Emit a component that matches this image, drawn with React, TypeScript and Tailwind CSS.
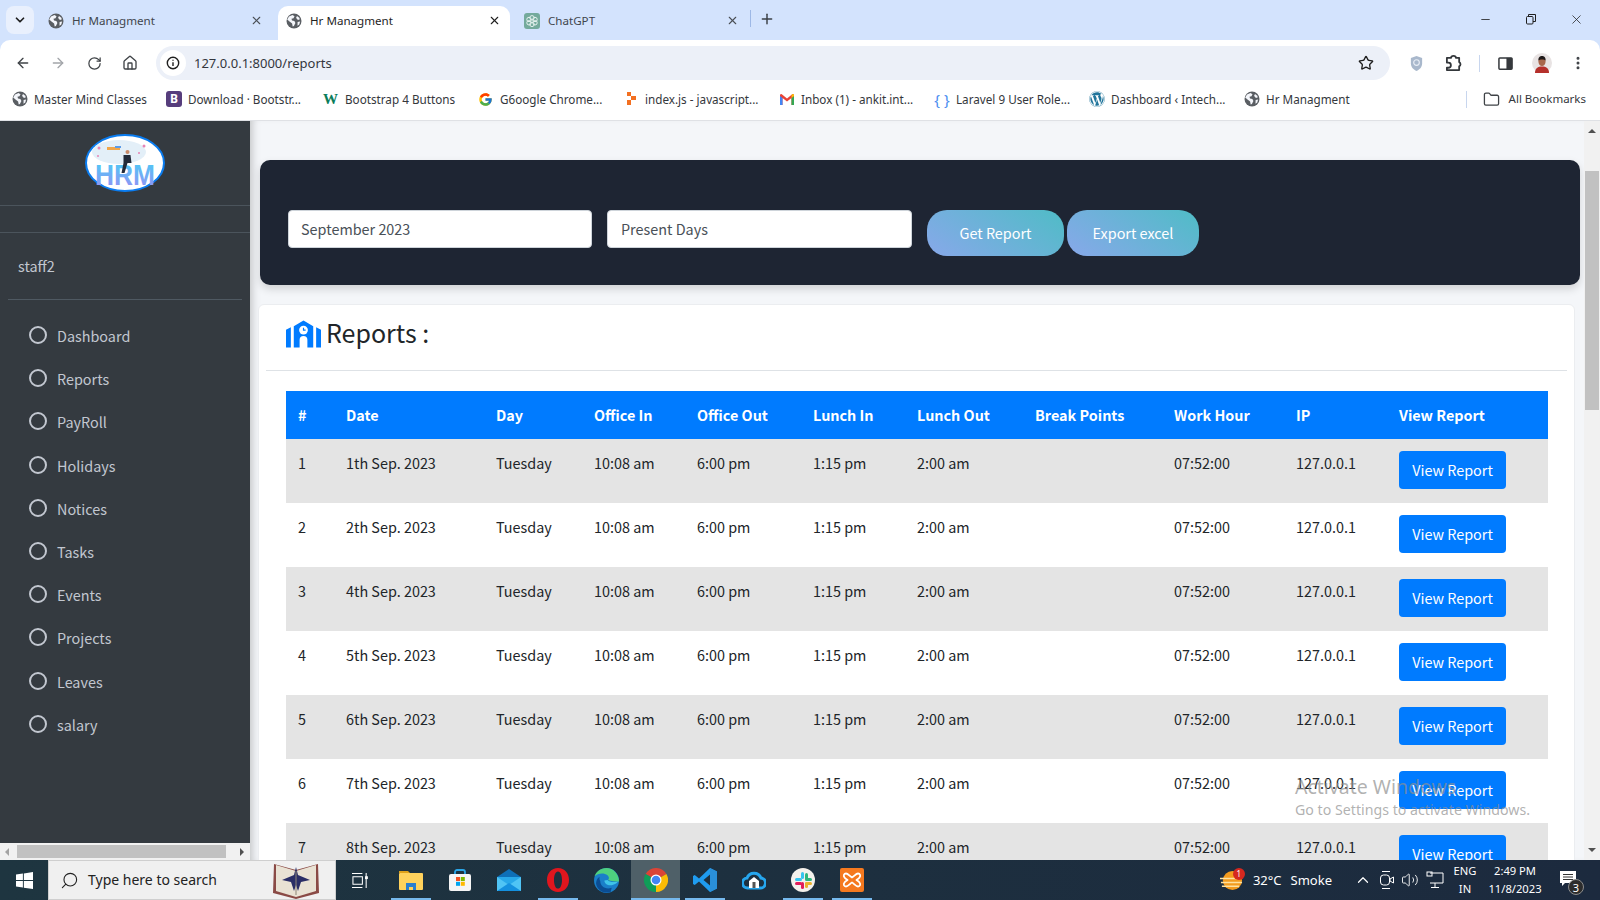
import React from "react";
import { ArrowLeft, ArrowRight, RotateCw, Home, Star, MoreVertical, X, Plus, ChevronDown, Minus, Search, ChevronUp, Volume2, Folder } from "lucide-react";
import { FcGoogle } from "react-icons/fc";
import { FaWordpress } from "react-icons/fa";

const ui = "font-['Noto_Sans',sans-serif]";
const page = "font-['Noto_Sans_CJK_SC','Noto_Sans',sans-serif]";

function Globe({ className = "" }: { className?: string }) {
  return (
    <svg viewBox="0 0 16 16" className={className}>
      <circle cx="8" cy="8" r="7.5" fill="#5a5e63" />
      <path d="M3 3.5 6.5 2l2 1.2-1 2-2 .6.5 1.6 2.4.6 1 2-1.5 3-1.2.4-.6-3-2.6-2L1.2 6.4zM11 3l2.6 2-.3 2-2-.6-1.2-1.6zM11.6 9l2.5-.4-.8 3-1.8 1.2z" fill="#f4f6fb" />
    </svg>
  );
}

function ChatGptIcon() {
  return (
    <svg viewBox="0 0 16 16" className="h-[16px] w-[16px]">
      <rect width="16" height="16" rx="3" fill="#74aa9c" />
      <g fill="none" stroke="#e6f2ef" strokeWidth="1">
        <circle cx="8" cy="4.8" r="2.2" />
        <circle cx="5" cy="6.5" r="2.2" />
        <circle cx="11" cy="6.5" r="2.2" />
        <circle cx="5" cy="9.8" r="2.2" />
        <circle cx="11" cy="9.8" r="2.2" />
        <circle cx="8" cy="11.4" r="2.2" />
      </g>
    </svg>
  );
}

function Tab({ active, title, icon, box }: { active?: boolean; title: string; icon: React.ReactNode; box: string }) {
  return (
    <div className={`relative flex h-[34px] items-center rounded-t-[10px] pb-[5px] ${box} ${active ? "bg-white text-[#1f1f1f]" : "text-[#41464d]"}`}>
      <span className="flex w-[24px] shrink-0 items-center">{icon}</span>
      <span className={`flex-1 text-[11.6px] leading-[16px] ${ui}`}>{title}</span>
      <X size={13} strokeWidth={2} className={active ? "text-[#1f1f1f]" : "text-[#4a4f55]"} />
    </div>
  );
}

const bookmarks: { w: string; label: string; icon: React.ReactNode }[] = [
  { w: "w-[154px]", label: "Master Mind Classes", icon: <Globe className="h-[16px] w-[16px]" /> },
  { w: "w-[157px]", label: "Download · Bootstr...", icon: <span className="flex h-[16px] w-[16px] items-center justify-center rounded-[3px] bg-[#563d7c] text-[12px] font-bold leading-none text-white">B</span> },
  { w: "w-[155px]", label: "Bootstrap 4 Buttons", icon: <span className="w-[16px] text-[15px] font-bold leading-none text-[#0b7d5a] font-['Liberation_Serif',serif]">W</span> },
  { w: "w-[145px]", label: "G6oogle Chrome...", icon: <FcGoogle size={15} /> },
  { w: "w-[156px]", label: "index.js - javascript...", icon: (
    <svg viewBox="0 0 16 16" className="h-[16px] w-[16px]"><path d="M4 1h4v4H4zM8 5h5v4H8zM4 9h4v5H4z" fill="#f37021" /></svg>
  ) },
  { w: "w-[155px]", label: "Inbox (1) - ankit.int...", icon: (
    <svg viewBox="0 0 16 16" className="h-[16px] w-[16px]">
      <path d="M1 3.5 2.5 3 8 7.5 13.500 3 15 3.500V14h-2.500V7L8 10.500 3.500 7V14H1z" fill="#ea4335" />
      <path d="M1 5v9h2.500V7z" fill="#4285f4" /><path d="M15 5v9h-2.500V7z" fill="#34a853" /><path d="M13.500 3 15 3.500V5l-2.500 2V4z" fill="#fbbc05" />
    </svg>
  ) },
  { w: "w-[155px]", label: "Laravel 9 User Role...", icon: <span className={`w-[16px] whitespace-pre text-center text-[15px] leading-none text-[#4a8df0] ${ui}`}>{"{ }"}</span> },
  { w: "w-[155px]", label: "Dashboard ‹ Intech...", icon: <FaWordpress size={16} className="text-[#21759b]" /> },
  { w: "w-[130px]", label: "Hr Managment", icon: <Globe className="h-[16px] w-[16px]" /> },
];

function ChromeBars() {
  return (
    <div className="shrink-0">
      <div className="flex h-[40px] bg-[#d3e3fd]">
        <div className="flex items-start pt-[6px]">
          <div className="ml-[6px] flex h-[28px] w-[28px] items-center justify-center rounded-[8px] bg-[#e9f0fd]">
            <ChevronDown size={14} strokeWidth={3} className="text-[#1f1f1f]" />
          </div>
        </div>
        <div className="ml-[6px] flex items-end">
          <Tab title="Hr Managment" box="w-[238px] pl-[8px] pr-[15px]" icon={<Globe className="h-[16px] w-[16px]" />} />
          <Tab active title="Hr Managment" box="w-[232px] pl-[8px] pr-[9px]" icon={<Globe className="h-[16px] w-[16px]" />} />
          <Tab title="ChatGPT" box="w-[239px] pl-[14px] pr-[10px]" icon={<ChatGptIcon />} />
          <div className="mb-[13px] ml-[1px] h-[17px] w-[1px] bg-[#9db8e6]" />
          <Plus size={16} strokeWidth={2.200} className="mb-[13px] ml-[8px] text-[#3b4046]" />
        </div>
        <div className="ml-auto flex items-center pb-[2px] text-[#1f1f1f]">
          <Minus size={13} strokeWidth={1.500} className="mr-[33px]" />
          <svg viewBox="0 0 12 12" className="mr-[32px] h-[12px] w-[12px]" fill="none" stroke="#1f1f1f" strokeWidth="1"><rect x="1.500" y="3.500" width="6.500" height="7.500" rx="1" /><path d="M3.500 3.500V1.500h7v7h-2.500" /></svg>
          <X size={15} strokeWidth={1.200} className="mr-[16px]" />
        </div>
      </div>
      <div className="flex h-[40px] items-center rounded-t-[10px] bg-white pt-[6px]">
        <ArrowLeft size={16} strokeWidth={2} className="ml-[15px] text-[#3f4347]" />
        <ArrowRight size={16} strokeWidth={2} className="ml-[19px] text-[#a2a5a9]" />
        <RotateCw size={15} strokeWidth={2} className="ml-[21px] text-[#3f4347]" />
        <Home size={16} strokeWidth={2} className="ml-[20px] text-[#3f4347]" />
        <div className="ml-[18px] flex h-[34px] w-[1234px] items-center rounded-full bg-[#ecf0f8] pl-[4px] pr-[16px]">
          <span className="flex h-[26px] w-[26px] items-center justify-center rounded-full bg-white">
            <svg viewBox="0 0 16 16" className="h-[14px] w-[14px]" fill="none" stroke="#1f1f1f" strokeWidth="1.600"><circle cx="8" cy="8" r="6.500" /><path d="M8 7v4.500M8 4.200v1.300" /></svg>
          </span>
          <span className={`ml-[8px] text-[13px] leading-[18px] text-[#33363d] ${ui}`}>127.0.0.1:8000/reports</span>
          <Star size={16} strokeWidth={2} className="ml-auto text-[#1f1f1f]" />
        </div>
        <svg viewBox="0 0 16 18" className="ml-[19px] h-[17px] w-[15px]"><path d="M8 1 14 3v6c0 4-3 6.500-6 8-3-1.500-6-4-6-8V3z" fill="#a9b8cc" /><circle cx="8" cy="8" r="3" fill="none" stroke="#e9eef6" strokeWidth="1.200" /></svg>
        <svg viewBox="0 0 18 18" className="ml-[21px] h-[17px] w-[17px]" fill="none" stroke="#33373b" strokeWidth="1.900" strokeLinejoin="round"><path d="M2 3h4.500a2.500 2 0 0 1 5 0H15v4.500a2.500 2.500 0 0 1 0 4.500V16H2v-2.500h1.500a2 2 0 0 0 0-5.500H2z" /></svg>
        <div className="ml-[17px] h-[17px] w-[1px] bg-[#c8d6ee]" />
        <svg viewBox="0 0 16 16" className="ml-[18px] h-[15px] w-[15px]" fill="none"><rect x="1" y="2" width="14" height="12" rx="1" stroke="#35383c" strokeWidth="1.600" /><rect x="9" y="2" width="6" height="12" fill="#35383c" /></svg>
        <svg viewBox="0 0 20 20" className="ml-[19px] h-[20px] w-[20px]">
          <circle cx="10" cy="10" r="10" fill="#e8e3e3" />
          <path d="M3 20c0-5 3-6.500 7-6.500s7 1.500 7 6.500z" fill="#b5302b" />
          <ellipse cx="10" cy="8.500" rx="3.600" ry="4.600" fill="#a8674b" />
          <path d="M6.400 7.500C6.400 4 8 3 10 3s3.600 1 3.600 4.500c-1-1.500-6-1.500-7.200 0z" fill="#1f1a1a" />
        </svg>
        <MoreVertical size={16} strokeWidth={2.500} className="ml-[18px] text-[#3f4347]" />
      </div>
      <div className="flex h-[41px] items-center border-b border-[#dfe1e5] bg-white pl-[12px] pb-[2px]">
        {bookmarks.map((b) => (
          <div key={b.label} className={`flex shrink-0 items-center ${b.w}`}>
            <span className="flex w-[22px] shrink-0 items-center">{b.icon}</span>
            <span className={`whitespace-nowrap text-[11.7px] leading-[16px] text-[#34373c] ${ui}`}>{b.label}</span>
          </div>
        ))}
        <div className="ml-auto flex items-center pr-[14px]">
          <div className="mr-[16px] h-[17px] w-[1px] bg-[#c8d6ee]" />
          <Folder size={17} strokeWidth={1.800} className="mr-[9px] text-[#3f4347]" />
          <span className={`text-[11.500px] leading-[16px] text-[#34373c] ${ui}`}>All Bookmarks</span>
        </div>
      </div>
    </div>
  );
}

function Logo() {
  return (
    <svg viewBox="0 0 80 58" className="h-[58px] w-[80px]">
      <ellipse cx="40" cy="29" rx="39" ry="28" fill="#fff" stroke="#0a7cf0" strokeWidth="2" />
      <ellipse cx="34" cy="18" rx="27" ry="12" fill="#e3eff8" />
      <rect x="22" y="13" width="13" height="3" fill="#f0a64a" />
      <rect x="30" y="12" width="6" height="2" fill="#5b9be8" />
      <circle cx="14" cy="14" r="1.500" fill="#e685b5" />
      <circle cx="59" cy="12" r="1.500" fill="#e685b5" />
      <circle cx="54" cy="19" r="1" fill="#e685b5" />
      <circle cx="13" cy="22" r="1" fill="#e685b5" />
      <defs>
        <linearGradient id="hrmg" x1="0" y1="0" x2="0" y2="1"><stop offset="0" stopColor="#45d0f5" /><stop offset="1" stopColor="#9a8cf5" /></linearGradient>
      </defs>
      <text x="40" y="51" textAnchor="middle" fontSize="29" fontWeight="700" fill="url(#hrmg)" fontFamily="'Liberation Sans',sans-serif" textLength="60" lengthAdjust="spacingAndGlyphs">HRM</text>
      <circle cx="42.500" cy="18" r="2" fill="#c98b6a" />
      <path d="M38.500 21h7l1 8h-4l-3 10h-3l2-10z" fill="#222b3a" />
    </svg>
  );
}

const nav = ["Dashboard", "Reports", "PayRoll", "Holidays", "Notices", "Tasks", "Events", "Projects", "Leaves", "salary"];

function Sidebar() {
  return (
    <aside className={`flex w-[250px] shrink-0 flex-col bg-[#343a40] ${page}`}>
      <div className="flex h-[85px] justify-center border-b border-[#4b545c] pt-[13px]">
        <Logo />
      </div>
      <div className="h-[27px] border-b border-[#4b545c]" />
      <div className="mx-[8px] h-[67px] border-b border-[#4f5962] pl-[10px] pt-[21px] text-[14.4px] leading-[24px] text-[#c2c7d0]">staff2</div>
      <nav className="flex flex-1 flex-col gap-[19.200px] pl-[29px] pt-[24px]">
        {nav.map((n) => (
          <div key={n} className="flex h-[24px] items-center text-[14.4px] leading-[24px] text-[#c2c7d0]">
            <span className="-mt-[2px] h-[18px] w-[18px] rounded-full border-2 border-[#c2c7d0]" />
            <span className="ml-[10px]">{n}</span>
          </div>
        ))}
      </nav>
      <div className="flex h-[17px] items-center bg-[#f1f1f1]">
        <div className="ml-[5px] h-0 w-0 border-y-[4px] border-r-[4px] border-y-transparent border-r-[#a3a3a3]" />
        <div className="ml-[8px] h-[13px] w-[209px] bg-[#c1c1c1]" />
        <div className="ml-[14px] h-0 w-0 border-y-[4px] border-l-[4px] border-y-transparent border-l-[#505050]" />
      </div>
    </aside>
  );
}

const colW = ["w-[48px]", "w-[150px]", "w-[98px]", "w-[103px]", "w-[116px]", "w-[104px]", "w-[118px]", "w-[139px]", "w-[122px]", "w-[103px]", "w-[161px]"];
const heads = ["#", "Date", "Day", "Office In", "Office Out", "Lunch In", "Lunch Out", "Break Points", "Work Hour", "IP", "View Report"];
const days = ["1th", "2th", "4th", "5th", "6th", "7th", "8th"];

function ReportsIcon() {
  return (
    <svg viewBox="0 0 36 28" className="h-[28px] w-[35px]">
      <path d="M0 9.500 5 7v21H0zM31 7l5 2.500V28h-5zM18 0l10 6v22h-6v-8a4 4 0 0 0-8 0v8H8V6z" fill="#007bff" />
      <circle cx="18" cy="10" r="4.500" fill="#fff" />
      <path d="M18 7.500V10h2.200" fill="none" stroke="#007bff" strokeWidth="1.200" />
    </svg>
  );
}

function Content() {
  return (
    <main className={`relative min-w-0 flex-1 overflow-hidden bg-[#f4f6f9] pt-[39px] shadow-[inset_8px_0_8px_-6px_rgba(0,0,0,0.22)] ${page}`}>
      <section className="ml-[10px] mr-[4px] flex h-[125px] items-start rounded-[10px] bg-[#1e2533] pl-[28px] pt-[50px] shadow-[0_4px_8px_rgba(0,0,0,0.15)]">
        <div className="flex h-[38px] w-[304px] items-center rounded-[4px] border border-[#ced4da] bg-white pl-[12px] text-[14.4px] leading-[24px] text-[#495057]">September 2023</div>
        <div className="ml-[15px] flex h-[38px] w-[305px] items-center rounded-[4px] border border-[#ced4da] bg-white pl-[13px] text-[14.4px] leading-[24px] text-[#495057]">Present Days</div>
        <button className="ml-[15px] h-[46px] w-[137px] rounded-[20px] bg-[linear-gradient(35deg,#88a8ea,#4fbcc6)] text-[14.4px] leading-[24px] text-white">Get Report</button>
        <button className="ml-[3px] h-[46px] w-[132px] rounded-[20px] bg-[linear-gradient(35deg,#88a8ea,#4fbcc6)] text-[14.4px] leading-[24px] text-white">Export excel</button>
      </section>
      <section className="ml-[8px] mr-[9px] mt-[19px] h-[600px] rounded-[6px] border border-[#ebedf0] bg-white pt-[1px]">
        <div className="mx-[7px] flex h-[65px] items-start border-b border-[#dee2e6] pl-[20px] pt-[14px]">
          <ReportsIcon />
          <h1 className="ml-[5px] -mt-[5px] text-[25px] leading-[34px] text-[#212529]">Reports :</h1>
        </div>
        <table className="ml-[27px] mt-[20px] w-[1262px] table-fixed border-collapse text-[14.4px] leading-[24px] text-[#212529]">
          <colgroup>
            {colW.map((c, i) => <col key={i} className={c} />)}
          </colgroup>
          <thead>
            <tr className="h-[48px] bg-[#007bff] text-left text-white">
              {heads.map((h) => <th key={h} className="px-[12px] align-middle font-bold">{h}</th>)}
            </tr>
          </thead>
          <tbody>
            {days.map((d, i) => (
              <tr key={d} className={`h-[64px] ${i % 2 === 0 ? "bg-[#e4e4e4]" : "bg-white"}`}>
                {[String(i + 1), `${d} Sep. 2023`, "Tuesday", "10:08 am", "6:00 pm", "1:15 pm", "2:00 am", "", "07:52:00", "127.0.0.1"].map((v, j) => (
                  <td key={j} className="px-[12px] pt-[12px] align-top">{v}</td>
                ))}
                <td className="px-[12px] pt-[12px] align-top">
                  <button className="h-[38px] w-[107px] rounded-[4px] bg-[#007bff] text-center text-[14.4px] leading-[24px] text-white">View Report</button>
                </td>
              </tr>
            ))}
          </tbody>
        </table>
      </section>
    </main>
  );
}

function PageScrollbar() {
  return (
    <div className="flex w-[16px] shrink-0 flex-col items-center bg-[#f1f1f1]">
      <div className="mt-[8px] h-0 w-0 border-x-[4px] border-b-[4px] border-x-transparent border-b-[#505050]" />
      <div className="mt-[38px] h-[239px] w-[14px] bg-[#c1c1c1]" />
      <div className="mb-[8px] mt-auto h-0 w-0 border-x-[4px] border-t-[4px] border-x-transparent border-t-[#505050]" />
    </div>
  );
}

function Slot({ line, lineClass = "", active, children }: { line?: boolean; lineClass?: string; active?: boolean; children: React.ReactNode }) {
  return (
    <div className={`relative flex h-[40px] w-[49px] shrink-0 items-center justify-center ${active ? "bg-[#4f6068]" : ""}`}>
      {children}
      {line && <span className={`absolute bottom-0 h-[2px] bg-[#76b9ed] ${lineClass || "left-[5px] right-[4px]"}`} />}
    </div>
  );
}

function Taskbar() {
  return (
    <footer className={`flex h-[40px] shrink-0 items-center bg-[linear-gradient(90deg,#1e3540,#1c2a3e)] text-white ${ui}`}>
      <div className="flex w-[48px] shrink-0 justify-center">
        <svg viewBox="0 0 18 18" className="h-[17px] w-[17px]" fill="#fff"><path d="M0 2.700 7.300 1.600v7H0zM8.300 1.500 18 0v8.600H8.300zM0 9.500h7.300v7L0 15.400zM8.300 9.500H18V18l-9.700-1.400z" /></svg>
      </div>
      <div className="flex h-[40px] w-[288px] shrink-0 items-center border border-[#cfcfcf] bg-[#f0f0f0] pl-[11px]">
        <Search size={19} strokeWidth={1.400} className="-scale-x-100 text-[#222]" />
        <span className="ml-[9px] text-[14px] leading-[20px] text-[#222]">Type here to search</span>
        <svg viewBox="0 0 48 38" className="ml-auto mr-[15px] h-[38px] w-[48px]">
          <path d="M2 3 24 9 46 3 47 32 24 38 1 32z" fill="#8a4a45" />
          <path d="M4 4 24 10 44 4 44 30 24 36 4 30z" fill="#e9e2d4" />
          <path d="M24 6 26 14 38 19 29 21 26 30 24 24 22 30 19 21 10 19 22 14z" fill="#2a2e66" />
          <path d="M24 10V34" stroke="#8d8678" strokeWidth="1" />
        </svg>
      </div>
      <div className="flex w-[50px] shrink-0 justify-center pr-[1px]">
        <svg viewBox="0 0 18 18" className="h-[17px] w-[17px]" fill="none" stroke="#fff" strokeWidth="1.100"><path d="M0 1.500h11M0 16.500h11M1 5h10v8H1zM15 1v16" /><rect x="13.800" y="4.500" width="3" height="3" fill="#fff" stroke="none" /></svg>
      </div>
      <Slot line lineClass="left-[5px] w-[40px]">
        <svg viewBox="0 0 24 22" className="h-[22px] w-[24px]"><path d="M0 2h9l2 2H0z" fill="#e0a21a" /><rect y="4" width="24" height="17" rx="1" fill="#ffd25c" /><path d="M7 21v-7h10v7h-3v-3h-4v3z" fill="#2a7fd0" /></svg>
      </Slot>
      <Slot>
        <svg viewBox="0 0 24 24" className="h-[24px] w-[24px]"><path d="M7 6V4a2 2 0 0 1 2-2h6a2 2 0 0 1 2 2v2" fill="none" stroke="#2aa6e8" strokeWidth="1.800" /><rect x="1" y="6" width="22" height="17" rx="2" fill="#f5f5f5" /><rect x="8" y="9" width="4" height="4" fill="#f25022" /><rect x="12.800" y="9" width="4" height="4" fill="#7fba00" /><rect x="8" y="13.800" width="4" height="4" fill="#00a4ef" /><rect x="12.800" y="13.800" width="4" height="4" fill="#ffb900" /></svg>
      </Slot>
      <Slot>
        <svg viewBox="0 0 24 22" className="h-[24px] w-[24px]"><path d="M0 8 12 0l12 8v2H0z" fill="#0e6fb8" /><rect y="8" width="24" height="14" fill="#28a8ea" /><path d="M0 8 12 16 24 8v14H0z" fill="#50c4f5" /><path d="M0 22 12 14l12 8z" fill="#1490df" /></svg>
      </Slot>
      <Slot line lineClass="left-[5px] w-[40px]">
        <svg viewBox="0 0 24 24" className="h-[24px] w-[24px]"><path fillRule="evenodd" d="M12 0c6.600 0 11 5.400 11 12s-4.400 12-11 12S1 18.600 1 12 5.400 0 12 0zm0 3.400c-2.600 0-4 3.800-4 8.600s1.400 8.600 4 8.600 4-3.800 4-8.600-1.400-8.600-4-8.600z" fill="#e0161e" /></svg>
      </Slot>
      <Slot>
        <svg viewBox="0 0 24 24" className="h-[25px] w-[25px]"><circle cx="12" cy="12" r="12" fill="#1a7fc9" /><path d="M24 13C24 6 18.500 0 12 0 6 0 2 3.500.500 8c3-3 9-4 12.500-1 2 1.800 1.500 3.500.500 4.500 3 1 7 1.500 10.500 1.500z" fill="#4ed07f" /><path d="M6 12.500c0 5 5 8.500 11 6.500l-1 4c-7 2-13-2-14-8 0-1 .500-5 3.500-6.500-.500 1-.500 2.500.500 4z" fill="#0b4d93" /><path d="M10 12c0 3 3 5 7 4.500 3-.5 5-2 6-3.500-4 1-8.500.5-10-1.500z" fill="#3fc4e8" /></svg>
      </Slot>
      <Slot active line lineClass="left-0 right-0">
        <svg viewBox="0 0 24 24" className="h-[24px] w-[24px]">
          <path d="M12 12 1.600 6A12 12 0 0 1 22.400 6z" fill="#db4437" />
          <path d="M12 12 22.400 6A12 12 0 0 1 12 24z" fill="#fbbc05" />
          <path d="M12 12V24A12 12 0 0 1 1.600 6z" fill="#0f9d58" />
          <circle cx="12" cy="12" r="5.500" fill="#fff" /><circle cx="12" cy="12" r="4.300" fill="#4285f4" />
        </svg>
      </Slot>
      <Slot line lineClass="left-[5px] w-[40px]">
        <svg viewBox="0 0 24 24" className="h-[24px] w-[24px]"><path d="M17 0 24 3.500v17L17 24 6 13.500 1.800 17 0 16V8l1.800-1L6 10.500zM17 6.500 10.500 12l6.500 5.500z" fill="#1f9cf0" /><path d="M17 0 24 3.500v17L17 24z" fill="#2a8fd8" /></svg>
      </Slot>
      <Slot>
        <svg viewBox="0 0 24 20" className="h-[20px] w-[24px]"><path d="M6 18a5 5 0 0 1-1-10 7.500 7.500 0 0 1 14 0 5 5 0 0 1-1 10z" fill="none" stroke="#26a6ee" strokeWidth="3" /><path d="M12 7l5 4v7H7v-7z" fill="#fff" /><rect x="10.500" y="12" width="3" height="6" fill="#555" /></svg>
      </Slot>
      <Slot line lineClass="left-[5px] w-[40px]">
        <svg viewBox="0 0 24 24" className="h-[24px] w-[24px]">
          <circle cx="12" cy="12" r="12" fill="#f4f1ec" />
          <rect x="10" y="4" width="3" height="7" rx="1.500" fill="#36c5f0" /><rect x="4" y="10" width="7" height="3" rx="1.500" fill="#36c5f0" />
          <rect x="14" y="5" width="3" height="7" rx="1.500" fill="#2eb67d" /><rect x="14" y="10" width="7" height="3" rx="1.500" fill="#2eb67d" />
          <rect x="14" y="14" width="7" height="3" rx="1.500" fill="#ecb22e" /><rect x="14" y="14" width="3" height="6" rx="1.500" fill="#ecb22e" />
          <rect x="10" y="14" width="3" height="7" rx="1.500" fill="#e01e5a" /><rect x="4" y="14" width="7" height="3" rx="1.500" fill="#e01e5a" />
        </svg>
      </Slot>
      <Slot line lineClass="left-[5px] w-[40px]">
        <svg viewBox="0 0 24 24" className="h-[24px] w-[24px]"><rect width="24" height="24" rx="2" fill="#f5791f" /><path d="M6 5.500c2 0 4 3 6 4 2-1 4-4 6-4s3 2 1.500 4c-1 1.400-2.500 1.800-3 2.500.5.700 2 1.100 3 2.500 1.500 2 .5 4-1.500 4s-4-3-6-4c-2 1-4 4-6 4s-3-2-1.500-4c1-1.400 2.500-1.800 3-2.500-.5-.7-2-1.100-3-2.500C3 7.500 4 5.500 6 5.500z" fill="none" stroke="#fff" strokeWidth="1.800" /></svg>
      </Slot>
      <div className="ml-auto flex h-[40px] items-center">
        <span className="relative flex w-[26px] justify-center">
          <svg viewBox="0 0 24 24" className="h-[23px] w-[23px]"><circle cx="13" cy="12" r="10" fill="#f39b1e" /><path d="M0 10h18M1 14h22M2 18h18" stroke="#ffe2a0" strokeWidth="1.500" /></svg>
          <span className="absolute -top-[1px] right-[0px] flex h-[12px] w-[12px] items-center justify-center rounded-full bg-[#d6281f] text-[8px] leading-none text-white">1</span>
        </span>
        <span className="ml-[8px] text-[13px] leading-[18px]">32°C</span>
        <span className="ml-[9px] text-[13px] leading-[18px]">Smoke</span>
        <ChevronUp size={18} strokeWidth={1.600} className="ml-[22px]" />
        <svg viewBox="0 0 16 20" className="ml-[7px] h-[20px] w-[16px]" fill="none" stroke="#fff" strokeWidth="1"><path d="M3 1.500h8M3 18.500h8" /><rect x="1.500" y="5" width="9" height="10" rx="3" /><path d="M11 9l3.500-2v6L11 11z" /></svg>
        <Volume2 size={18} strokeWidth={1.200} className="ml-[6px]" />
        <svg viewBox="0 0 18 18" className="ml-[7px] h-[18px] w-[18px]" fill="none" stroke="#fff" strokeWidth="1"><path d="M4 2h13v10H4M9 12v4M5 16.500h8" /><rect x="1" y="1" width="5" height="4" /></svg>
        <div className="ml-[5px] flex w-[32px] flex-col items-center text-[11.2px] leading-[18px]"><span>ENG</span><span>IN</span></div>
        <div className="flex w-[68px] flex-col items-center text-[11.2px] leading-[18px]"><span>2:49 PM</span><span>11/8/2023</span></div>
        <div className="relative ml-[5px] mr-[20px] h-[40px] w-[26px]">
          <svg viewBox="0 0 16 16" className="absolute left-[6px] top-[11px] h-[16px] w-[16px]"><path d="M0 0h16v12H5l-3 3v-3H0z" fill="#fff" /><path d="M3 3.500h10M3 6h10M3 8.500h10" stroke="#333" strokeWidth="1" /></svg>
          <span className="absolute left-[14px] top-[19px] flex h-[16px] w-[16px] items-center justify-center rounded-full border border-[#8d8d8d] bg-[#2c2c2c] text-[11px] leading-none text-white">3</span>
        </div>
      </div>
    </footer>
  );
}

export default function App() {
  return (
    <div className="relative flex h-[900px] w-[1600px] flex-col overflow-hidden bg-[#d3e3fd]">
      <ChromeBars />
      <div className="flex min-h-0 flex-1">
        <Sidebar />
        <Content />
        <PageScrollbar />
      </div>
      <Taskbar />
      <div className={`pointer-events-none absolute left-[1295px] top-[773px] text-[#8f8f8f]/70 ${ui}`}>
        <div className="text-[19.5px] leading-[28px]">Activate Windows</div>
        <div className="text-[14.2px] leading-[18px]">Go to Settings to activate Windows.</div>
      </div>
    </div>
  );
}
